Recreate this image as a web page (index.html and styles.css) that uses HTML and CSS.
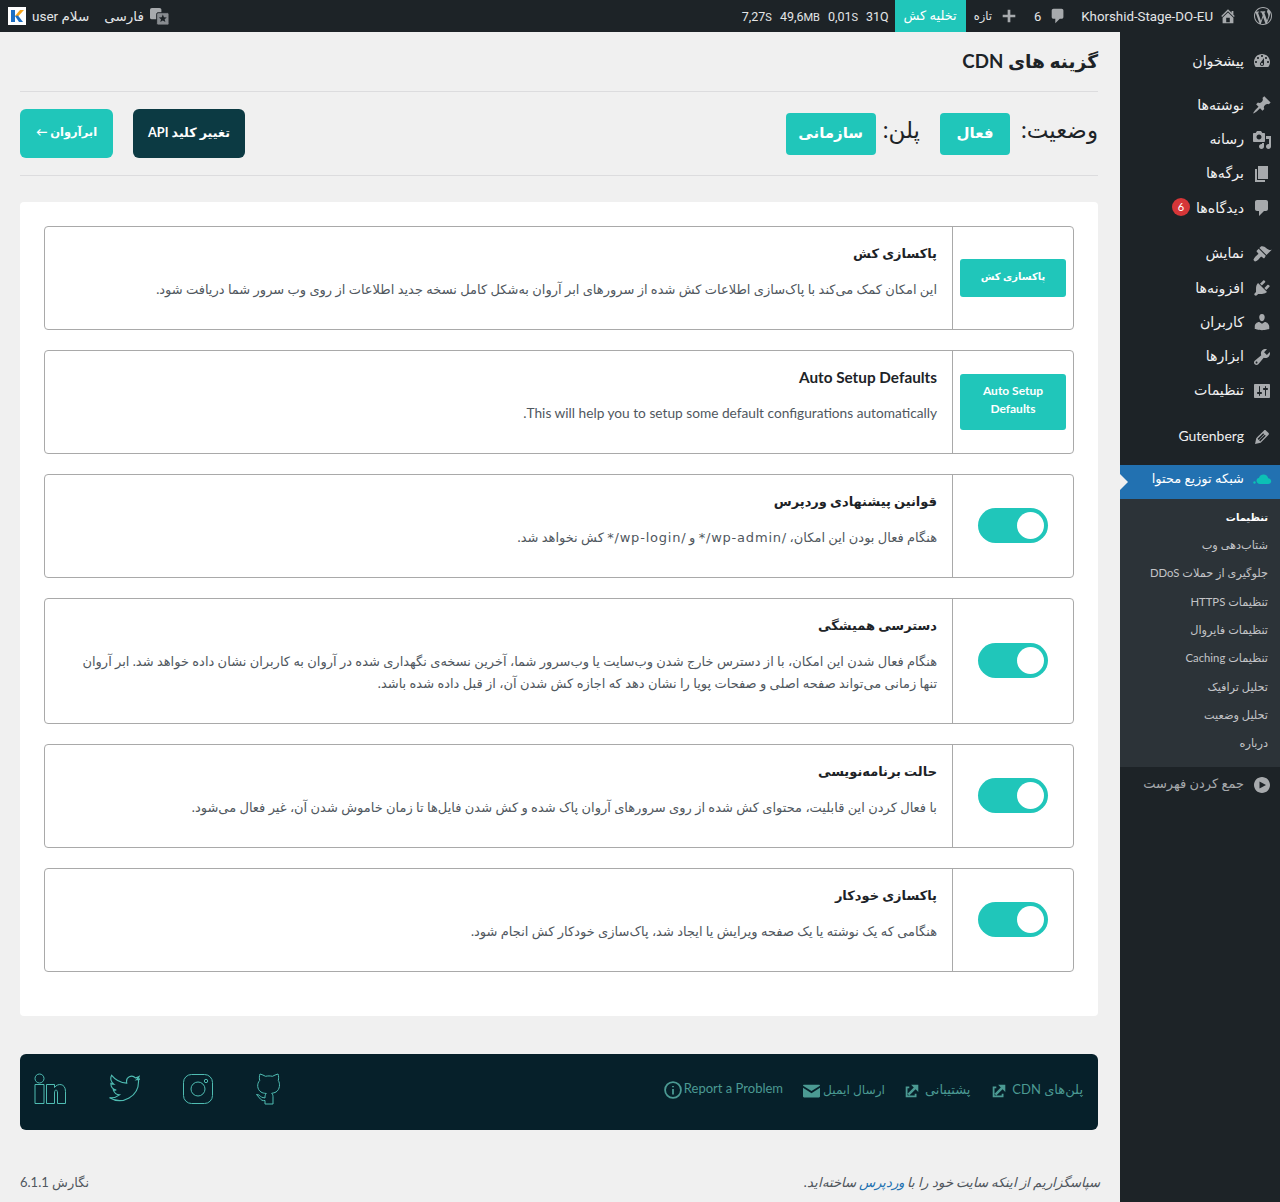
FILE: index.html
```html
<!DOCTYPE html>
<html lang="fa" dir="rtl">
<head>
  <meta charset="UTF-8" />
  <title>گزینه های CDN</title>
  <link rel="stylesheet" href="styles.css">
</head>
<body>

  <header class="adminbar">
    <svg class="bar-icon wp-logo" viewBox="0 0 20 20"><path d="M20 10c0-5.510-4.490-10-10-10C4.480 0 0 4.490 0 10c0 5.520 4.480 10 10 10 5.510 0 10-4.480 10-10zM7.780 15.370L4.370 6.220c.550-.020 1.170-.080 1.170-.080.500-.060.440-1.130-.060-1.110 0 0-1.450.110-2.370.110-.180 0-.370 0-.580-.010C4.120 2.690 6.890 1.030 10 1.030c2.360 0 4.480.930 6.090 2.450-.680-.110-1.650.390-1.650 1.580 0 .740.450 1.360.900 2.100.350.610.550 1.360.550 2.460 0 1.490-1.400 5-1.400 5l-3.030-8.370c.540-.020.820-.170.820-.170.500-.050.440-1.250-.060-1.220 0 0-1.440.120-2.380.120-.870 0-2.330-.120-2.330-.120-.500-.030-.560 1.200-.060 1.220l.920.080 1.260 3.410zM17.410 10c.240-.640.740-1.870.430-4.250.700 1.290 1.050 2.710 1.050 4.250 0 3.290-1.730 6.240-4.400 7.800.970-2.590 1.940-5.210 2.920-7.800zM6.100 18.090C3.120 16.650 1.110 13.530 1.110 10c0-1.300.230-2.480.720-3.590C3.250 10.300 4.670 14.200 6.100 18.090zm4.030-6.630l2.580 6.980c-.860.290-1.740.450-2.710.450-.810 0-1.600-.110-2.340-.330.830-2.380 1.650-4.740 2.470-7.100z"/></svg>
    <svg class="bar-icon home" viewBox="0 0 20 20"><path d="M16 8.500l1.530 1.530-1.060 1.060L10 4.620l-6.470 6.470-1.060-1.060L10 2.500l4 4v-2h2v4zm-6-2.460l6 5.990V18H4v-5.970zM12 17v-5H8v5h4z"/></svg>
    <span class="bar-item site-name">Khorshid-Stage-DO-EU</span>
    <svg class="bar-icon comment" viewBox="0 0 20 20"><path d="M5 2h9c1.100 0 2 .9 2 2v7c0 1.100-.9 2-2 2h-2l-5 5v-5H5c-1.100 0-2-.9-2-2V4c0-1.100.9-2 2-2z"/></svg>
    <span class="bar-item count">6</span>
    <svg class="bar-icon plus" viewBox="0 0 20 20"><path d="M17 8.500v3h-5.500V17h-3v-5.500H3v-3h5.500V3h3v5.500z"/></svg>
    <span class="bar-item new">تازه</span>
    <span class="bar-purge">تخلیه کش</span>
    <span class="bar-item stat">31Q</span>
    <span class="bar-item stat">0,01<small>S</small></span>
    <span class="bar-item stat">49,6<small>MB</small></span>
    <span class="bar-item stat">7,27<small>S</small></span>

    <svg class="bar-icon translate" viewBox="0 0 20 20"><rect x="0" y="1" width="12" height="12" rx="2"/><rect class="translate-top" x="7" y="6" width="13" height="13" rx="1.500"/><path class="translate-star" d="M13.500 8l1.200 2.800 3 .2-2.300 1.900.8 3-2.700-1.600-2.700 1.600.8-3-2.300-1.900 3-.2z"/></svg>
    <span class="bar-item lang">فارسی</span>
    <span class="bar-item howdy">سلام user</span>
    <svg class="avatar" viewBox="0 0 18 18"><rect width="18" height="18" fill="#fff"/><rect x="3" y="3" width="4" height="12" fill="#1c6fc4"/><polygon points="7,9 12,3 16,3 10,9.500" fill="#f5a31a"/><polygon points="7,9 10,8.500 15,15 11,15" fill="#1c6fc4"/></svg>
  </header>

  <div class="layout">
    <nav class="sidemenu">
      <a class="menu-item"><svg viewBox="0 0 20 20"><path d="M3.760 16h12.480c1.100-1.370 1.760-3.110 1.760-5 0-4.420-3.580-8-8-8s-8 3.580-8 8c0 1.890.66 3.630 1.760 5zM10 4c.55 0 1 .45 1 1s-.45 1-1 1-1-.45-1-1 .45-1 1-1zM6 6c.55 0 1 .45 1 1s-.45 1-1 1-1-.45-1-1 .45-1 1-1zm8 0c.55 0 1 .45 1 1s-.45 1-1 1-1-.45-1-1 .45-1 1-1zm-5.370 5.550L12 7v6c0 1.100-.9 2-2 2s-2-.9-2-2c0-.57.24-1.080.63-1.450zM4 10c.55 0 1 .45 1 1s-.45 1-1 1-1-.45-1-1 .45-1 1-1zm12 0c.55 0 1 .45 1 1s-.45 1-1 1-1-.45-1-1 .45-1 1-1zm-5 3c0-.55-.45-1-1-1s-1 .45-1 1 .45 1 1 1 1-.45 1-1z"/></svg>پیشخوان</a>

      <a class="menu-item gap-10"><svg viewBox="0 0 20 20"><path d="M10.440 3.020l1.820-1.820 6.360 6.350-1.830 1.820c-1.050-.68-2.480-.57-3.410.36l-.75.75c-.92.93-1.040 2.350-.35 3.410l-1.830 1.820-2.410-2.410-2.800 2.790c-.42.42-3.380 2.710-3.800 2.290s1.860-3.390 2.280-3.810l2.790-2.790L4.100 9.360l1.830-1.820c1.050.69 2.480.57 3.400-.36l.75-.75c.93-.92 1.050-2.350.36-3.410z"/></svg>نوشته‌ها</a>
      <a class="menu-item"><svg viewBox="0 0 20 20"><path d="M13 11V4c0-.55-.45-1-1-1h-1.670L9 1H5L3.670 3H2c-.55 0-1 .45-1 1v7c0 .55.45 1 1 1h10c.55 0 1-.45 1-1zM7 4.500c1.380 0 2.500 1.120 2.500 2.500S8.380 9.500 7 9.500 4.500 8.380 4.500 7 5.620 4.500 7 4.500zM14 6h5v10.500c0 1.380-1.120 2.500-2.500 2.500S14 17.880 14 16.500s1.120-2.500 2.500-2.500c.17 0 .34.020.5.050V9h-3V6zm-4 8.050V13h2v3.500c0 1.380-1.120 2.500-2.500 2.500S7 17.880 7 16.500 8.120 14 9.500 14c.17 0 .34.020.5.050z"/></svg>رسانه</a>
      <a class="menu-item"><svg viewBox="0 0 20 20"><path d="M6 15V2h10v13H6zm-1 1h8v2H3V5h2v11z"/></svg>برگه‌ها</a>
      <a class="menu-item"><svg viewBox="0 0 20 20"><path d="M5 2h9c1.100 0 2 .9 2 2v7c0 1.100-.9 2-2 2h-2l-5 5v-5H5c-1.100 0-2-.9-2-2V4c0-1.100.9-2 2-2z"/></svg>دیدگاه‌ها<span class="badge">6</span></a>

      <a class="menu-item gap-11"><svg viewBox="0 0 20 20"><path d="M14.480 11.060L7.410 3.990l1.500-1.500c.5-.56 2.300-.47 3.510.32 1.210.8 1.430 1.280 2.910 2.100 1.180.64 2.450 1.260 4.450.85zm-.71.71L6.700 4.700 4.930 6.470c-.39.39-.39 1.020 0 1.410l1.060 1.060c.39.39.39 1.030 0 1.420-.6.6-1.430 1.150-2.210 1.930-.78.78-2.690 3.410-2.300 3.800l1.420 1.420c.39.39 3.020-1.520 3.800-2.300.78-.78 1.330-1.610 1.930-2.210.39-.39 1.030-.39 1.420 0l1.060 1.060c.39.39 1.020.39 1.410 0z"/></svg>نمایش</a>
      <a class="menu-item"><svg viewBox="0 0 20 20"><path d="M13.110 4.360L9.870 7.600 8 5.730l3.240-3.240c.35-.34 1.050-.2 1.560.32.52.51.66 1.210.31 1.550zm-8 1.770l.91-1.120 9.010 9.010-1.190.84c-.71.71-2.630 1.160-3.820 1.160H6.140L4.900 17.260c-.59.59-1.540.59-2.120 0-.59-.58-.59-1.530 0-2.120l1.240-1.240v-3.880c0-1.130.4-3.190 1.090-3.890zm7.260 3.970l3.240-3.240c.34-.35 1.040-.21 1.550.31.52.51.66 1.210.31 1.550l-3.240 3.250z"/></svg>افزونه‌ها</a>
      <a class="menu-item"><svg viewBox="0 0 20 20"><path d="M10 9.250c-2.270 0-2.730-3.440-2.730-3.440C7 4.020 7.820 2 9.970 2c2.160 0 2.980 2.020 2.710 3.810 0 0-.41 3.440-2.680 3.440zm0 2.570L12.720 10c2.390 0 4.520 2.330 4.520 4.530v2.490s-3.650 1.130-7.240 1.130c-3.650 0-7.240-1.130-7.240-1.130v-2.490c0-2.250 1.940-4.480 4.470-4.480z"/></svg>کاربران</a>
      <a class="menu-item"><svg viewBox="0 0 20 20"><path d="M16.680 9.770c-1.340 1.340-3.300 1.670-4.950.99l-5.410 6.520c-.99.99-2.590.99-3.580 0s-.99-2.590 0-3.570l6.520-5.420c-.68-1.650-.35-3.610.99-4.950 1.280-1.280 3.120-1.620 4.720-1.060l-2.890 2.890 2.820 2.820 2.860-2.870c.53 1.580.18 3.390-1.080 4.650zM3.810 16.210c.4.39 1.040.39 1.430 0 .4-.4.4-1.040 0-1.430-.39-.4-1.030-.4-1.430 0-.39.39-.39 1.030 0 1.430z"/></svg>ابزارها</a>
      <a class="menu-item"><svg viewBox="0 0 20 20"><path d="M18 16V4c0-.55-.45-1-1-1H3c-.55 0-1 .45-1 1v12c0 .55.45 1 1 1h14c.55 0 1-.45 1-1zM8 11h1c.55 0 1 .45 1 1s-.45 1-1 1H8v1.500c0 .28-.22.5-.5.5s-.5-.22-.5-.5V13H6c-.55 0-1-.45-1-1s.45-1 1-1h1V5.500c0-.28.22-.5.5-.5s.5.22.5.5V11zm5-2h-1c-.55 0-1-.45-1-1s.45-1 1-1h1V5.500c0-.28.22-.5.5-.5s.5.22.5.5V7h1c.55 0 1 .45 1 1s-.45 1-1 1h-1v5.500c0 .28-.22.5-.5.5s-.5-.22-.5-.5V9z"/></svg>تنظیمات</a>

      <a class="menu-item gap-11 latin"><svg viewBox="0 0 20 20"><path d="M13.890 3.390l2.710 2.720c.46.46.42 1.240.03 1.640l-8.010 8.020-5.560 1.160 1.160-5.580s7.600-7.630 7.990-8.030c.39-.39 1.220-.39 1.680.07zm-2.730 2.790l-5.590 5.610 1.110 1.110 5.540-5.650zm-2.970 8.230l5.580-5.600-1.070-1.080-5.590 5.600z"/></svg>Gutenberg</a>

      <a class="menu-item active"><svg viewBox="0 0 20 20"><circle class="cloud" cx="2.500" cy="14.500" r="1.200"/><path class="cloud" d="M8 16c-2 0-3.500-1.400-3.500-3.200 0-1.500 1-2.800 2.500-3.100C7.800 7.500 9.500 6.500 11.500 6.500c2.400 0 4.300 1.600 4.700 3.700 1.500.1 3 1.300 3 3 0 1.600-1.300 2.800-3 2.800z"/></svg>شبکه توزیع محتوا</a>
      <ul class="submenu">
        <li class="current">تنظیمات</li>
        <li>شتاب‌دهی وب</li>
        <li>جلوگیری از حملات DDoS</li>
        <li>تنظیمات HTTPS</li>
        <li>تنظیمات فایروال</li>
        <li>تنظیمات Caching</li>
        <li>تحلیل ترافیک</li>
        <li>تحلیل وضعیت</li>
        <li>درباره</li>
      </ul>
      <a class="menu-item collapse"><svg viewBox="0 0 20 20"><path d="M10 2c4.420 0 8 3.580 8 8s-3.580 8-8 8-8-3.580-8-8 3.580-8 8-8zm-2.500 4.500v7L14 10z"/></svg>جمع کردن فهرست</a>
    </nav>

    <main class="content">
      <div class="page-title"><h1>گزینه های CDN</h1></div>

      <section class="status-row">
        <span class="status-label">وضعیت:</span>
        <span class="pill">فعال</span>
        <span class="status-label plan">پلن:</span>
        <span class="pill wide">سازمانی</span>
        <div class="status-actions">
          <a class="btn btn-dark">تغییر کلید API</a>
          <a class="btn btn-arvan">ابرآروان ←</a>
        </div>
      </section>

      <section class="card">
        <div class="option">
          <div class="option-side"><a class="side-btn">پاکسازی کش</a></div>
          <div class="option-body">
            <h3>پاکسازی کش</h3>
            <p>این امکان کمک می‌کند با پاک‌سازی اطلاعات کش شده از سرورهای ابر آروان به‌شکل کامل نسخه جدید اطلاعات از روی وب سرور شما دریافت شود.</p>
          </div>
        </div>
        <div class="option">
          <div class="option-side"><a class="side-btn tall">Auto Setup Defaults</a></div>
          <div class="option-body en">
            <h3>Auto Setup Defaults</h3>
            <p>This will help you to setup some default configurations automatically.</p>
          </div>
        </div>
        <div class="option">
          <div class="option-side"><span class="toggle"><i></i></span></div>
          <div class="option-body">
            <h3>قوانین پیشنهادی وردپرس</h3>
            <p>هنگام فعال بودن این امکان، <span class="path">/wp-admin/*</span> و <span class="path">/wp-login/*</span> کش نخواهد شد.</p>
          </div>
        </div>
        <div class="option">
          <div class="option-side"><span class="toggle"><i></i></span></div>
          <div class="option-body">
            <h3>دسترسی همیشگی</h3>
            <p>هنگام فعال شدن این امکان، با از دسترس خارج شدن وب‌سایت یا وب‌سرور شما، آخرین نسخه‌ی نگهداری شده در آروان به کاربران نشان داده خواهد شد. ابر آروان<br>تنها زمانی می‌تواند صفحه اصلی و صفحات پویا را نشان دهد که اجازه کش شدن آن، از قبل داده شده باشد.</p>
          </div>
        </div>
        <div class="option">
          <div class="option-side"><span class="toggle"><i></i></span></div>
          <div class="option-body">
            <h3>حالت برنامه‌نویسی</h3>
            <p>با فعال کردن این قابلیت، محتوای کش شده از روی سرورهای آروان پاک شده و کش شدن فایل‌ها تا زمان خاموش شدن آن، غیر فعال می‌شود.</p>
          </div>
        </div>
        <div class="option">
          <div class="option-side"><span class="toggle"><i></i></span></div>
          <div class="option-body">
            <h3>پاکسازی خودکار</h3>
            <p>هنگامی که یک نوشته یا یک صفحه ویرایش یا ایجاد شد، پاک‌سازی خودکار کش انجام شود.</p>
          </div>
        </div>
      </section>

      <footer class="plugin-footer">
        <div class="footer-links">
          <a>پلن‌های CDN<svg viewBox="0 0 20 20"><path d="M9 3h8v8l-3-3-7 7-2-2 7-7zM3 5h4v2H5v8h8v-2h2v4H3z"/></svg></a>
          <a>پشتیبانی<svg viewBox="0 0 20 20"><path d="M9 3h8v8l-3-3-7 7-2-2 7-7zM3 5h4v2H5v8h8v-2h2v4H3z"/></svg></a>
          <a class="mail">ارسال ایمیل<svg viewBox="2 3 16 14"><path d="M3 4h14c.6 0 1 .4 1 1L10 10 2 5c0-.6.4-1 1-1zm-1 3l8 5 8-5v8c0 .6-.4 1-1 1H3c-.6 0-1-.4-1-1z"/></svg></a>
          <a class="report">Report a Problem<svg class="info" viewBox="0 0 20 20"><circle cx="10" cy="10" r="8.800"/><path d="M10 9v6M10 5.500v1.500"/></svg></a>
        </div>
        <div class="footer-social">
          <svg viewBox="0 0 32 32"><circle cx="5.500" cy="5.500" r="4.500"/><path d="M1 11.500h9v19H1zM12.500 11.500h8v3c3-4.500 11-4.500 11 4v12h-8V20c0-4-3-4-3 0v10.500h-8z"/></svg>
          <svg viewBox="3 3 28 25"><path d="M31 6.500c-1 .5-2 .8-3 .9 1-.7 1.800-1.600 2.200-2.800-1 .6-2.100 1-3.200 1.200-3-3.200-8.800-.9-7.600 4.500-5-.3-10-2.800-13.200-6.800-1.500 2.700-.7 6 1.900 7.800-1 0-1.800-.3-2.600-.7 0 2.800 2 5.200 4.700 5.800-.8.200-1.700.3-2.500.1.800 2.400 3 4 5.400 4.100-2.500 2-5.600 2.800-8.700 2.500 11 6.700 26-1 25.300-15.400 1-.8 1.700-1.500 2.300-2.200z"/></svg>
          <svg viewBox="0 0 32 32"><rect x="1.500" y="1.500" width="29" height="29" rx="8"/><circle cx="16" cy="16" r="7"/><circle cx="24" cy="8" r="1.700"/></svg>
          <svg class="octo" viewBox="0 0 26 32"><path d="M4 1c2 .5 4 1.500 5.500 2.300 2.300-.5 4.700-.5 7 0C18 2.500 20 1.500 22 1c.8 2 .8 4.500.3 6.500 2 3 1.700 9-2.300 11.500-1.300.8-2.800 1-4.300 1.300 1 1 1.300 2 1.300 3.500V31H9v-3.500c-2.500.5-4-.5-5.500-2.500L.5 21.500c2 0 3.500 1 5 2.700l3.500.8v-1c0-1.500.3-2.500 1.300-3.500C8 20.200 6.300 20 5 19 1 16.500.7 10.500 3.700 7.500 3.200 5.500 3.200 3 4 1z"/></svg>
        </div>
      </footer>

      <div class="wp-footer">
        <em>سپاسگزاریم از اینکه سایت خود را با <a>وردپرس</a> ساخته‌اید.</em>
        <span>نگارش 6.1.1</span>
      </div>
    </main>
  </div>

</body>
</html>
```

FILE: styles.css
```css
* {
  box-sizing: border-box;
}

html, body {
  margin: 0;
  height: 100%;
}

body {
  font-family: Lato, "DejaVu Sans", sans-serif;
  font-size: 13px;
  background-color: #f0f0f0;
  color: #3c434a;
}

/* top bar */
.adminbar {
  height: 32px;
  background-color: #1d2327;
  color: #e4e6e7;
  display: flex;
  align-items: center;
  font-size: 12.5px;
  font-family: Roboto, "DejaVu Sans", sans-serif;
  overflow: hidden;
}

.bar-icon {
  fill: #a7aaad;
  flex: none;
}

.wp-logo {
  width: 18px;
  height: 18px;
  margin-right: 8px;
}

.home {
  width: 18px;
  height: 18px;
  margin-right: 17px;
}

.site-name {
  margin-right: 6px;
  font-size: 13.3px;
}

.comment {
  width: 18px;
  height: 18px;
  margin-right: 14px;
}

.count {
  margin-right: 8px;
  font-size: 13px;
}

.plus {
  width: 18px;
  height: 18px;
  margin-right: 16px;
}

.new {
  margin-right: 8px;
  font-size: 11.5px;
}

.bar-purge {
  background-color: #20c6ba;
  color: #fff;
  height: 32px;
  line-height: 32px;
  width: 71px;
  text-align: center;
  margin-right: 8px;
  margin-left: -2px;
  font-size: 13px;
}

.stat {
  direction: ltr;
  margin-right: 8px;
}

.stat small {
  font-size: 11px;
}

.translate {
  width: 19px;
  height: 19px;
  margin-right: auto;
}

.translate-top {
  fill: #888c90;
  stroke: #1d2327;
  stroke-width: 1;
}

.translate-star {
  fill: #1d2327;
}

.lang {
  margin-right: 6px;
  font-size: 13.5px;
}

.howdy {
  margin-right: 15px;
  font-size: 13.5px;
}

.avatar {
  width: 18px;
  height: 18px;
  margin: 0 6px 0 8px;
  flex: none;
}

.layout {
  display: flex;
  min-height: 1170px;
}

/* side menu */
.sidemenu {
  width: 160px;
  flex: none;
  background-color: #1d2327;
  padding-top: 12px;
}

.menu-item {
  height: 34.25px;
  display: flex;
  align-items: center;
  color: #f0f0f1;
  font-size: 14.2px;
  padding: 0 8px 2px 0;
}

.menu-item svg {
  width: 20px;
  height: 20px;
  fill: #a7aaad;
  margin: 2px 0 0 8px;
  flex: none;
}

.gap-10 {
  margin-top: 10px;
}

.gap-11 {
  margin-top: 11.5px;
}

.latin {
  font-size: 14px;
}

.badge {
  width: 18px;
  height: 18px;
  line-height: 18px;
  border-radius: 50%;
  background-color: #d63638;
  color: #fff;
  text-align: center;
  font-size: 11px;
  margin-right: 6px;
}

.menu-item.active {
  background-color: #2271b1;
  color: #fff;
  font-size: 13px;
  height: 34px;
  padding-bottom: 7px;
  margin-top: 11px;
  position: relative;
}

.menu-item.active svg {
  margin-top: 0;
}

.active::before {
  content: "";
  position: absolute;
  left: 0;
  top: 9px;
  border: 8px solid transparent;
  border-right: 0;
  border-left-color: #f0f0f0;
}

.menu-item .cloud {
  fill: #0cc0b5;
}

.submenu {
  list-style: none;
  margin: 0;
  padding: 4px 12px 10px 0;
  background-color: #2c3338;
  color: #c3c4c7;
  font-size: 11.3px;
}

.submenu li {
  height: 28.3px;
  line-height: 28.3px;
}

.submenu .current {
  color: #fff;
  font-weight: bold;
  font-size: 10px;
}

.menu-item.collapse {
  color: #a7aaad;
  font-size: 13px;
  padding-bottom: 4px;
}

.menu-item.collapse svg {
  margin-top: 4px;
}

/* main column */
.content {
  flex: 1;
  padding: 0 22px 0 20px;
  min-width: 0;
}

.page-title {
  height: 60px;
  border-bottom: 1px solid #dcdcde;
  display: flex;
  align-items: center;
  padding-bottom: 2px;
}

h1 {
  margin: 0;
  font-size: 18.7px;
  font-weight: bold;
  color: #1d2327;
}

.status-row {
  height: 84px;
  border-bottom: 1px solid #dcdcde;
  display: flex;
  align-items: center;
}

.status-label {
  font-size: 23px;
  line-height: 30px;
  margin-top: -10px;
  color: #1d2327;
  margin-left: 11px;
}

.status-label.plan {
  margin-right: 20px;
  margin-left: 7px;
}

.pill {
  background-color: #20c6ba;
  color: #fff;
  font-weight: bold;
  font-size: 15px;
  height: 42px;
  line-height: 38px;
  width: 70px;
  text-align: center;
  border-radius: 4px;
}

.pill.wide {
  width: 90px;
}

.status-actions {
  margin-right: auto;
  display: flex;
  gap: 20px;
}

.btn {
  background-color: #20c6ba;
  color: #fff;
  font-weight: bold;
  font-size: 12.7px;
  height: 49px;
  line-height: 46px;
  text-align: center;
  border-radius: 6px;
}

.btn-dark {
  background-color: #0c3a43;
  width: 112px;
}

.btn-arvan {
  width: 93px;
  font-size: 11.5px;
}

.card {
  margin-top: 26px;
  background-color: #fff;
  border-radius: 4px;
  padding: 24px 24px 44px;
  display: flex;
  flex-direction: column;
  gap: 20px;
}

.option {
  display: flex;
  border: 1px solid #a9a9a9;
  border-radius: 4px;
}

.option-side {
  width: 121px;
  flex: none;
  border-left: 1px solid #a9a9a9;
  display: flex;
  align-items: center;
  justify-content: center;
}

.side-btn {
  width: 106px;
  min-height: 38px;
  padding: 8px 10px;
  background-color: #20c6ba;
  color: #fff;
  font-size: 10px;
  font-weight: bold;
  line-height: 18px;
  text-align: center;
  border-radius: 3px;
}

.side-btn.tall {
  font-size: 12px;
  padding: 8px 12px;
  min-height: 56px;
}

.toggle {
  width: 70px;
  height: 35px;
  margin-top: -1px;
  border-radius: 18px;
  background-color: #20c6ba;
  display: flex;
  align-items: center;
  padding: 0 4px;
}

.toggle i {
  width: 27px;
  height: 27px;
  border-radius: 50%;
  background-color: #fff;
}

.option-body {
  flex: 1;
  padding: 15px 15px 29px;
}

.option-body h3 {
  margin: 0 0 14px;
  font-size: 13px;
  line-height: 22px;
  font-weight: bold;
  color: #1d2327;
}

.option-body p {
  margin: 0;
  font-size: 13px;
  line-height: 22px;
  color: #50575e;
}

.option-body .path {
  font-family: "DejaVu Sans", sans-serif;
  letter-spacing: .8px;
  line-height: 1;
}

.option-body.en h3 {
  font-size: 15.3px;
}

.option-body.en p {
  font-size: 13.7px;
}

/* footer box */
.plugin-footer {
  margin-top: 38px;
  height: 76px;
  background-color: #06202a;
  border-radius: 6px;
  padding: 0 15px 6px 14px;
  display: flex;
  align-items: center;
  justify-content: space-between;
}

.footer-links {
  display: flex;
  gap: 20px;
  align-items: center;
}

.footer-links a {
  display: flex;
  align-items: center;
  gap: 4px;
  color: #4b9a93;
  font-size: 13px;
}

.footer-links svg {
  width: 18px;
  height: 18px;
  fill: #4b9a93;
  margin-top: 4px;
}

.footer-links .mail {
  font-size: 12.2px;
  gap: 3px;
  margin-right: -2px;
}

.footer-links .mail svg {
  width: 17px;
}

.footer-links .report {
  gap: 2px;
  margin-top: -2px;
}

.footer-links .info {
  fill: none;
  stroke: #4b9a93;
  stroke-width: 2;
}

.footer-social {
  display: flex;
  direction: ltr;
  gap: 42px;
  padding-bottom: 1px;
}

.footer-social svg {
  width: 32px;
  height: 32px;
  fill: none;
  stroke: #4fbcb2;
  stroke-width: 1;
}

.footer-social .octo {
  width: 26px;
}

.wp-footer {
  margin-top: 44px;
  display: flex;
  justify-content: space-between;
  align-items: center;
  font-size: 13.3px;
  margin-right: -2px;
  color: #50575e;
}

.wp-footer a {
  color: #2271b1;
}

.wp-footer span {
  font-size: 13px;
}
```
